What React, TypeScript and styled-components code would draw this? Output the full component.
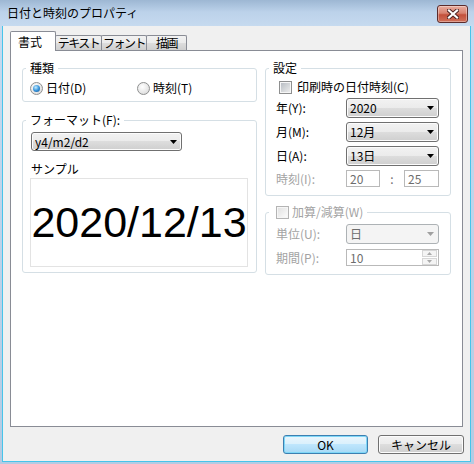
import * as React from 'react';
import styled, { createGlobalStyle } from 'styled-components';

const GlobalStyle = createGlobalStyle`
  html, body {
    margin: 0;
    padding: 0;
    background: #ffffff;
  }
  body {
    font-family: "Noto Sans CJK JP", "Liberation Sans", sans-serif;
    font-size: 12px;
    color: #000000;
  }
  * {
    box-sizing: border-box;
  }
`;

const DownArrow = ({ disabled }: { disabled?: boolean }) => (
  <svg width="7" height="4" viewBox="0 0 7 4">
    <polygon points="0,0 7,0 3.5,4" fill={ disabled ? '#a0a0a0' : '#000000' } />
  </svg>
);

const SmallArrow = ({ up }: { up?: boolean }) => (
  <svg width="5" height="3" viewBox="0 0 5 3">
    <polygon points={ up ? '0,3 5,3 2.5,0' : '0,0 5,0 2.5,3' } fill="#a9a9a9" />
  </svg>
);

const CloseGlyph = () => (
  <svg width="12" height="10" viewBox="0 0 12 10">
    <path d="M2 1.5 L10 8.5 M10 1.5 L2 8.5" stroke="#4a2020" strokeWidth="4" strokeLinecap="square" />
    <path d="M2 1.5 L10 8.5 M10 1.5 L2 8.5" stroke="#ffffff" strokeWidth="2.2" strokeLinecap="square" />
  </svg>
);

export default () => {
  return (
    <>
      <GlobalStyle />
      <Window>
        <TitleBar>
          <Title>日付と時刻のプロパティ</Title>
          <CloseButton><CloseGlyph /></CloseButton>
        </TitleBar>
        <Body>
          <TabStrip>
            <Tab $active $width={ 46 }>書式</Tab>
            <Tab $width={ 47 }>テキスト</Tab>
            <Tab $width={ 46 }>フォント</Tab>
            <Tab $width={ 41 }>描画</Tab>
          </TabStrip>
          <Panel>
            <Column $gap={ 11 }>
              <Group>
                <Legend>種類</Legend>
                <GroupContent $pad="6px 7px 6px 7px">
                  <RadioRow>
                    <Option><Radio $checked />日付(D)</Option>
                    <Option><Radio />時刻(T)</Option>
                  </RadioRow>
                </GroupContent>
              </Group>
              <Group>
                <Legend>フォーマット(F):</Legend>
                <GroupContent $pad="5px 8px 5px 7px">
                  <Combo $width={ 151 } $height={ 19 } $indent={ 1 }>
                    <span>y4/m2/d2</span>
                    <DownArrow />
                  </Combo>
                  <SampleLabel>サンプル</SampleLabel>
                  <SampleBox>2020/12/13</SampleBox>
                </GroupContent>
              </Group>
            </Column>
            <Column $gap={ 9 }>
              <Group>
                <Legend>設定</Legend>
                <GroupContent $pad="5px 8px 8px 10px">
                  <CheckRow><Checkbox />印刷時の日付時刻(C)</CheckRow>
                  <FormRow $height={ 20 }>
                    <FieldLabel>年(Y):</FieldLabel>
                    <Combo $width={ 93 } $height={ 20 }><span>2020</span><DownArrow /></Combo>
                  </FormRow>
                  <FormRow $height={ 20 }>
                    <FieldLabel>月(M):</FieldLabel>
                    <Combo $width={ 93 } $height={ 20 }><span>12月</span><DownArrow /></Combo>
                  </FormRow>
                  <FormRow $height={ 20 }>
                    <FieldLabel>日(A):</FieldLabel>
                    <Combo $width={ 93 } $height={ 20 }><span>13日</span><DownArrow /></Combo>
                  </FormRow>
                  <FormRow $height={ 17 }>
                    <FieldLabel $disabled>時刻(I):</FieldLabel>
                    <TimeFields>
                      <TextField $width={ 34 }>20</TextField>
                      <Colon>:</Colon>
                      <TextField $width={ 35 }>25</TextField>
                    </TimeFields>
                  </FormRow>
                </GroupContent>
              </Group>
              <Group>
                <Legend $disabled><Checkbox $light $offset={ 3 } />加算/減算(W)</Legend>
                <GroupContent $pad="5px 8px 8px 10px">
                  <FormRow $height={ 20 } $first>
                    <FieldLabel $disabled>単位(U):</FieldLabel>
                    <Combo $width={ 93 } $height={ 20 } $disabled><span>日</span><DownArrow disabled /></Combo>
                  </FormRow>
                  <FormRow $height={ 17 } $gap={ 5 }>
                    <FieldLabel $disabled>期間(P):</FieldLabel>
                    <TextField $width={ 93 }>
                      <span>10</span>
                      <Spinner>
                        <SpinHalf><SmallArrow up /></SpinHalf>
                        <SpinHalf><SmallArrow /></SpinHalf>
                      </Spinner>
                    </TextField>
                  </FormRow>
                </GroupContent>
              </Group>
            </Column>
          </Panel>
          <ButtonRow>
            <PushButton $default $width={ 85 }>OK</PushButton>
            <PushButton $width={ 86 }>キャンセル</PushButton>
          </ButtonRow>
        </Body>
      </Window>
    </>
  );
};

const Window = styled.div`
  width: 474px;
  height: 464px;
  display: flex;
  flex-direction: column;
  background: linear-gradient(180deg, #9db7d3 0, #bcd2ea 12px, #c6daef 26px, #b4cbe3 100%);
`;

const TitleBar = styled.div`
  height: 26px;
  flex: none;
  display: flex;
  align-items: center;
  justify-content: space-between;
  padding: 0 6px 0 7px;
`;

const Title = styled.span`
  font-size: 12px;
  line-height: 14px;
  color: #000000;
`;

const CloseButton = styled.div`
  width: 31px;
  height: 18px;
  margin-top: 1px;
  border: 1px solid #5b2b2b;
  border-radius: 3px;
  background: linear-gradient(180deg, #e8ac9e 0%, #d88270 45%, #c3503b 55%, #d0705a 100%);
  box-shadow: inset 0 0 0 1px rgba(255, 255, 255, 0.35);
  display: flex;
  align-items: center;
  justify-content: center;
`;

const Body = styled.div`
  flex: 1;
  margin: 0 3px 2px 2px;
  background: #f0f0f0;
  border: 1px solid #47c4ea;
  border-top: none;
  padding: 5px 7px 7px 7px;
  display: flex;
  flex-direction: column;
`;

const TabStrip = styled.div`
  display: flex;
  align-items: flex-end;
  height: 20px;
  margin-bottom: -1px;
  position: relative;
  z-index: 1;
`;

const Tab = styled.div<{ $active?: boolean; $width: number }>`
  width: ${ p => p.$width }px;
  height: ${ p => p.$active ? 20 : 15 }px;
  margin-bottom: ${ p => p.$active ? 0 : 1 }px;
  border: 1px solid #898c95;
  border-bottom: none;
  border-radius: 2px 2px 0 0;
  background: ${ p => p.$active
    ? '#ffffff'
    : 'linear-gradient(180deg, #f2f2f2 0%, #ebebeb 50%, #dddddd 50%, #cfcfcf 100%)' };
  display: flex;
  align-items: center;
  justify-content: center;
  padding-right: ${ p => p.$active ? 6 : 0 }px;
  line-height: 14px;
  letter-spacing: ${ p => p.$active ? 0 : -1.5 }px;
  white-space: nowrap;
  overflow: hidden;
  position: relative;
  z-index: ${ p => p.$active ? 2 : 1 };

  & + & {
    margin-left: -1px;
  }
`;

const Panel = styled.div`
  flex: 1;
  background: #ffffff;
  border: 1px solid #898c95;
  padding: 10px 11px;
  display: grid;
  grid-template-columns: 235px 186px;
  column-gap: 8px;
  align-items: start;
`;

const Column = styled.div<{ $gap: number }>`
  display: flex;
  flex-direction: column;
  gap: ${ p => p.$gap }px;
`;

const Group = styled.fieldset`
  margin: 0;
  padding: 0;
  min-width: 0;
  border: 1px solid #d5dfe5;
  border-radius: 3px;
`;

const Legend = styled.legend<{ $disabled?: boolean }>`
  margin-left: 3px;
  padding: 0 4px;
  height: 14px;
  line-height: 14px;
  display: flex;
  align-items: center;
  color: ${ p => p.$disabled ? '#a3a3a3' : '#000000' };
`;

const GroupContent = styled.div<{ $pad: string }>`
  padding: ${ p => p.$pad };
`;

const RadioRow = styled.div`
  display: grid;
  grid-template-columns: 107px auto;
  height: 14px;
`;

const Option = styled.div`
  display: flex;
  align-items: center;
  gap: 3px;
  line-height: 14px;
`;

const Radio = styled.span<{ $checked?: boolean }>`
  width: 13px;
  height: 13px;
  border-radius: 50%;
  border: 1px solid #8e8f8f;
  background: radial-gradient(circle at 40% 35%, #ffffff 0%, #e6e6e6 60%, #cfcfcf 100%);
  display: flex;
  align-items: center;
  justify-content: center;
  flex: none;

  &::after {
    content: '';
    display: ${ p => p.$checked ? 'block' : 'none' };
    width: 7px;
    height: 7px;
    border-radius: 50%;
    background: radial-gradient(circle at 40% 35%, #c4ecff 0%, #3a96dc 50%, #0d4d8c 100%);
  }
`;

const Combo = styled.div<{ $width: number; $height: number; $indent?: number; $disabled?: boolean }>`
  width: ${ p => p.$width }px;
  height: ${ p => p.$height }px;
  margin-left: ${ p => p.$indent || 0 }px;
  border: 1px solid ${ p => p.$disabled ? '#adb2b5' : '#707070' };
  border-radius: 3px;
  background: ${ p => p.$disabled
    ? '#f4f4f4'
    : 'linear-gradient(180deg, #f2f2f2 0%, #ebebeb 50%, #dddddd 50%, #cfcfcf 100%)' };
  box-shadow: ${ p => p.$disabled ? 'none' : 'inset 0 0 0 1px #fcfcfc' };
  color: ${ p => p.$disabled ? '#6d6d6d' : '#000000' };
  display: flex;
  align-items: center;
  justify-content: space-between;
  padding: 0 4px 0 3px;
  line-height: 14px;
`;

const SampleLabel = styled.div`
  margin: 11px 0 0 1px;
  line-height: 14px;
  height: 14px;
`;

const SampleBox = styled.div`
  margin-top: 2px;
  width: 218px;
  height: 89px;
  border: 1px solid #e3e3e3;
  background: #ffffff;
  display: flex;
  align-items: center;
  justify-content: center;
  font-family: "Liberation Sans", Arial, sans-serif;
  font-size: 43px;
  line-height: 1;
  white-space: nowrap;
  color: #000000;
`;

const CheckRow = styled.div`
  display: flex;
  align-items: center;
  gap: 2px;
  height: 14px;
  margin-left: 3px;
  line-height: 14px;
`;

const Checkbox = styled.span<{ $light?: boolean; $offset?: number }>`
  width: 13px;
  height: 13px;
  flex: none;
  margin: 0 3px 0 ${ p => p.$offset || 0 }px;
  border: 1px solid ${ p => p.$light ? '#b4b4b4' : '#8e8f8f' };
  background: #f6f6f6;
  padding: 1px;

  &::after {
    content: '';
    display: block;
    width: 9px;
    height: 9px;
    background: ${ p => p.$light
      ? 'linear-gradient(135deg, #e2e2e2, #fbfbfb)'
      : 'linear-gradient(135deg, #b9bec4, #ececec)' };
  }
`;

const FormRow = styled.div<{ $height: number; $first?: boolean; $gap?: number }>`
  display: grid;
  grid-template-columns: 70px 93px;
  align-items: center;
  height: ${ p => p.$height }px;
  margin-top: ${ p => p.$first ? 0 : (p.$gap ?? 4) }px;
`;

const FieldLabel = styled.span<{ $disabled?: boolean }>`
  line-height: 14px;
  color: ${ p => p.$disabled ? '#a3a3a3' : '#000000' };
  white-space: nowrap;
`;

const TimeFields = styled.div`
  display: flex;
  align-items: center;
  height: 17px;
`;

const Colon = styled.span`
  width: 24px;
  text-align: center;
  color: #6d6d6d;
  line-height: 14px;
`;

const TextField = styled.div<{ $width: number }>`
  width: ${ p => p.$width }px;
  height: 17px;
  border: 1px solid #b9b9b9;
  background: #ffffff;
  color: #6d6d6d;
  padding-left: 3px;
  display: flex;
  align-items: center;
  justify-content: space-between;
  line-height: 14px;
`;

const Spinner = styled.div`
  width: 16px;
  height: 15px;
  display: flex;
  flex-direction: column;
  gap: 1px;
  padding: 0 1px 0 0;
`;

const SpinHalf = styled.div`
  flex: 1;
  border: 1px solid #d6d6d6;
  background: #f4f4f4;
  display: flex;
  align-items: center;
  justify-content: center;
`;

const ButtonRow = styled.div`
  display: flex;
  justify-content: flex-end;
  gap: 10px;
  margin: 8px -1px 0 0;
`;

const PushButton = styled.div<{ $default?: boolean; $width: number }>`
  width: ${ p => p.$width }px;
  height: 19px;
  border: 1px solid ${ p => p.$default ? '#3c7fb1' : '#707070' };
  border-radius: 3px;
  background: ${ p => p.$default
    ? 'linear-gradient(180deg, #eaf6fd 0%, #d9f0fc 50%, #bee6fd 50%, #a7d9f5 100%)'
    : 'linear-gradient(180deg, #f2f2f2 0%, #ebebeb 50%, #dddddd 50%, #cfcfcf 100%)' };
  box-shadow: inset 0 0 0 1px ${ p => p.$default ? '#7fd7f7' : '#fcfcfc' };
  display: flex;
  align-items: center;
  justify-content: center;
  line-height: 14px;
`;
